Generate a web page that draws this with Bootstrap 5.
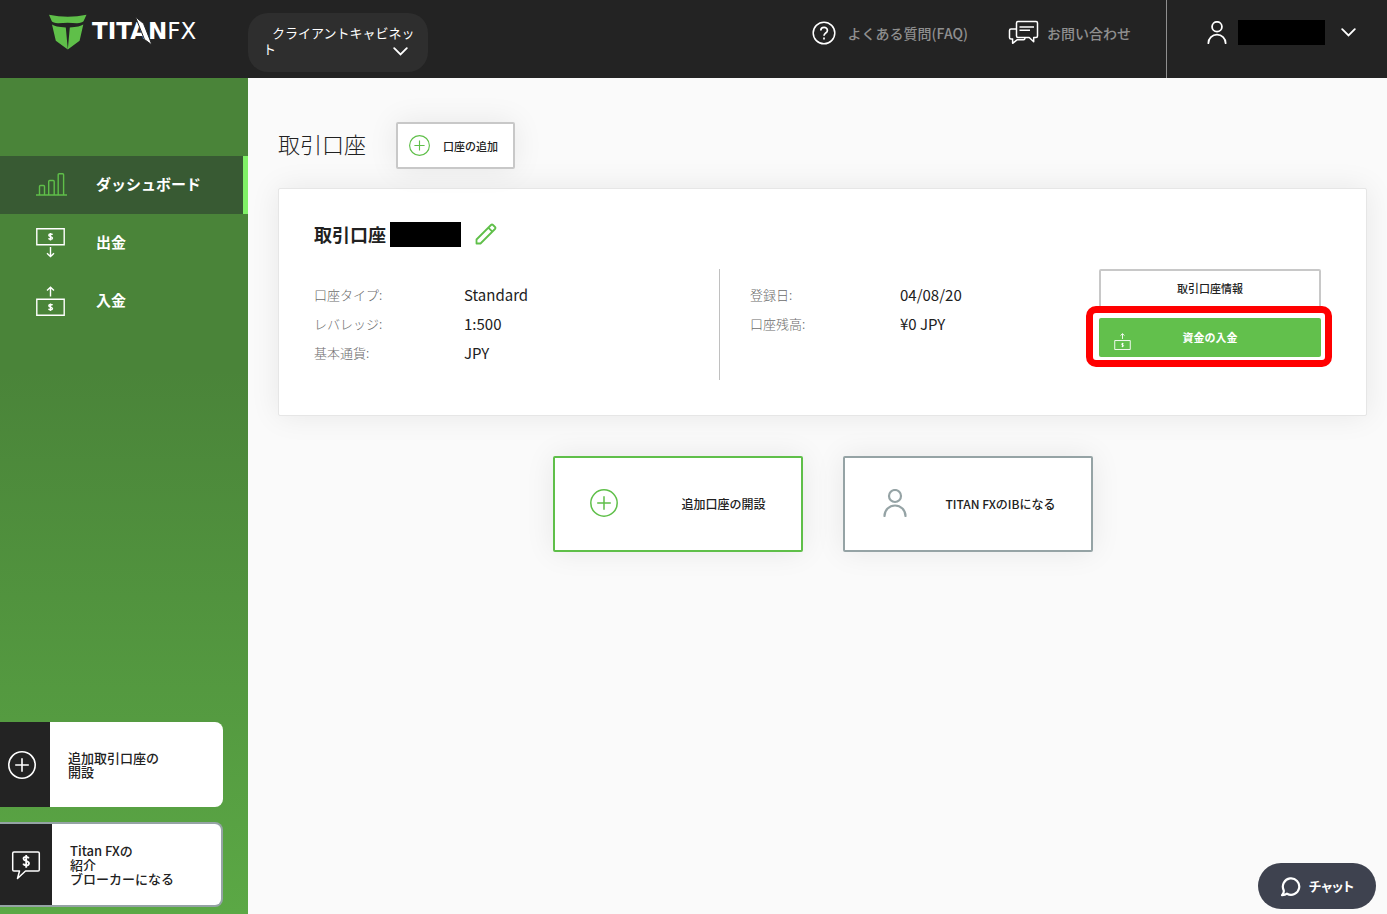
<!DOCTYPE html>
<html lang="ja">
<head>
<meta charset="utf-8">
<meta name="viewport" content="width=device-width, initial-scale=1">
<title>Titan FX クライアントキャビネット</title>
<link rel="stylesheet" href="https://cdn.jsdelivr.net/npm/bootstrap@5.3.0/dist/css/bootstrap.min.css">
<style>
  body { font-family: "Noto Sans CJK JP", "Open Sans", sans-serif; background: #fafafa; color: #212121; }
  svg { display: block; flex: none; fill: none; stroke: currentColor; }
  a { color: inherit; text-decoration: none; }

  .topbar { background: #232323; height: 78px; }
  .topbar-item { height: 65px; }
  .brand { width: 248px; padding: 14px 0 0 48px; }
  .brand-name { fill: #fff; stroke: none; font: 700 23px "DejaVu Sans", sans-serif; }
  .brand-name .thin { font-weight: 400; }
  .cabinet { width: 180px; height: 59px; margin-top: 13px; padding: 0 10px 4px 15px; border: 0; border-radius: 20px; background: #2e2e2e; color: #fff; font-size: 13px; line-height: 16px; text-indent: 9px; text-align: left; }
  .cabinet svg { right: 20px; bottom: 16px; }
  .cabinet:hover { background: #2e2e2e; color: #fff; }
  .help-link { color: #8f8f8f; font-size: 14px; line-height: 20px; font-weight: 500; }
  .help-link svg { color: #fff; }
  .help-links { gap: 40px; padding-right: 35px; }
  .user-menu { width: 221px; height: 78px; border: 0; border-left: 1px solid #8f8f8f; background: none; color: #fff; padding: 0 30px 13px 40px; }
  .redacted { background: #000; height: 25px; }
  .redacted-user { width: 87px; margin: 0 16px 0 11px; }
  .redacted-account { width: 71px; margin: 0 14px 0 4px; }

  .side { width: 248px; min-height: calc(100vh - 78px); padding: 78px 0 7px; background: linear-gradient(#4a8439 0%, #4a8439 35%, #5ba845 100%); }
  .side-link { height: 58px; padding: 0 0 2px 36px; color: #fff; font-size: 15px; font-weight: 700; line-height: 20px; }
  .side-link .icon-slot { width: 60px; flex: none; padding-top: 1px; }
  .side-link.current { background: #385a33; border-right: 5px solid #80f067; }
  .side-link.current svg { color: #5fbf49; }
  .promos { gap: 15px; }
  .promo { width: 223px; height: 85px; border-radius: 0 8px 8px 0; overflow: hidden; background: #fff; font-size: 13px; line-height: 14px; font-weight: 500; }
  .promo-icon { width: 50px; background: #232323; color: #fff; padding-left: 8px; }
  .promo-grey { border: 2px solid #95a3a5; border-left: 0; }
  .promo-grey .promo-icon { width: 52px; padding-left: 11px; }
  .promo-text { padding-left: 18px; }

  .content { padding: 44px 20px 40px 30px; }
  .page-title { font-size: 22px; font-weight: 300; line-height: 30px; padding-bottom: 5px; margin: 0 30px 0 0; }
  .soft { box-shadow: 0 0 30px rgba(0, 0, 0, .08); }
  .box-btn { background: #fff; border: 2px solid #c8c8c8; border-radius: 2px; color: #212121; font-weight: 500; line-height: 16px; }
  .add-btn { width: 119px; height: 47px; font-size: 11px; padding: 0 0 0 11px; gap: 13px; }
  .green { color: #5fbf49; }
  .account { margin-top: 19px; padding: 32px 45px 35px 35px; background: #fff; border: 1px solid #e6e6e6; border-radius: 2px; }
  .account h2 { font-size: 18px; font-weight: 700; line-height: 26px; }
  .account-grid { display: grid; grid-template-columns: minmax(0, 406fr) minmax(0, 379fr) 222px; margin-top: 22px; }
  .facts { display: grid; grid-template-columns: 150px 1fr; grid-auto-rows: 29px; align-items: center; height: 111px; padding-top: 11px; margin: 0; }
  .facts dt { color: #6c6c6c; font-size: 13px; font-weight: 300; line-height: 20px; }
  .facts dd { margin: 0; font-size: 15px; line-height: 20px; font-weight: 400; }
  .facts-first { border-right: 1px solid #c0c0c0; }
  .facts-second { padding-left: 30px; }
  .side-btn { height: 39px; font-size: 11px; width: 100%; }
  .box-btn.side-btn { padding-bottom: 3px; }
  .deposit { position: relative; z-index: 1; margin-top: 10px; }
  .deposit::before { content: ""; position: absolute; z-index: -1; inset: -12px -11px -10px -13px; border: 7px solid #f00; border-radius: 10px; background: #fff; }
  .deposit button { background: #62c04c; border: 0; border-radius: 2px; color: #fff; font-weight: 700; }
  .deposit svg { left: 15px; top: 15px; }
  .big-btns { gap: 40px; margin-top: 40px; }
  .big-btn { width: 250px; height: 96px; font-size: 12px; padding: 0 35px; }
  .big-btn.open { border-color: #5fbf49; }
  .big-btn.partner { border-color: #95a3a5; padding-left: 38px; }
  .big-btn svg { margin-bottom: 2px; }
  .partner svg { color: #95a3a5; }
  .chat { right: 11px; bottom: 5px; width: 118px; height: 46px; border: 0; border-radius: 23px; background: #3e424f; color: #fff; font-size: 13px; font-weight: 700; line-height: 20px; gap: 8px; font-feature-settings: "palt"; }
</style>
</head>
<body>
<svg width="0" height="0" class="position-absolute" aria-hidden="true">
  <symbol id="plus" viewBox="0 0 28 28"><circle cx="14" cy="14" r="13.2"/><path d="M14 7.2v13.6M7.2 14h13.6"/></symbol>
  <symbol id="person" viewBox="0 0 24 28"><circle cx="12" cy="7" r="6"/><path d="M1.5 27a10.5 10.5 0 0 1 21 0" stroke-linecap="round"/></symbol>
  <symbol id="deposit" viewBox="0 0 29 30"><path d="M.8 13.3h27.4v15.9H.8z"/><path d="M14.5 10.5V1.5M11 4.5l3.500-3.300 3.500 3.300M16.500 19.200c-.4-1-3.700-1.100-3.700.5 0 1.700 3.700 1.200 3.700 2.900 0 1.700-3.500 1.500-3.900.2M14.500 17.500v7.500"/></symbol>
  <symbol id="withdraw" viewBox="0 0 29 30"><path d="M.8 .8h27.400v15.900H.8z"/><path d="M14.500 19v9.500M11 25.300l3.500 3.300 3.500-3.300M16.500 6.700c-.4-1-3.700-1.100-3.700.5 0 1.700 3.700 1.200 3.700 2.900 0 1.700-3.500 1.500-3.900.2M14.500 5v7.500"/></symbol>
  <symbol id="chevron" viewBox="0 0 15 9"><path d="M1.200 1.200l6.300 6.300 6.300-6.300" stroke-linecap="round"/></symbol>
</svg>

<header class="topbar d-flex align-items-start">
  <a class="brand" href="#" aria-label="Titan FX">
    <svg width="160" height="37" viewBox="0 0 160 37">
      <path fill="#5fbf49" stroke="none" d="M1 .8 Q20 4.500 38.500 .8 L35.500 7.300 Q34 9 29 9.300 Q20 8 10 9.300 Q5 9 3.800 7.300Z M4 10.500 Q7 13 17.800 13.400 L19.800 35.500 L7.800 26.800Z M35.300 10.500 Q32 13 21.800 13.400 L19.800 35.500 L31.600 26.800Z"/>
      <text class="brand-name" x="44" y="25">TITAN<tspan class="thin">FX</tspan></text>
      <path fill="#fff" stroke="#232323" stroke-width="1" d="M87.500 3l8 6.500L104 31l-7.500-5.500z"/>
    </svg>
  </a>
  <button class="cabinet btn position-relative" type="button">クライアントキャビネット
    <svg class="position-absolute" width="15" height="9" stroke-width="1.800"><use href="#chevron"/></svg>
  </button>
  <nav class="help-links topbar-item d-flex align-items-center ms-auto">
    <a class="help-link d-flex align-items-center gap-2" href="#">
      <svg class="me-1" width="24" height="24" viewBox="0 0 24 24" stroke-width="1.500"><circle cx="12" cy="12" r="10.800"/><path stroke-width="1.700" d="M8.800 9.600c0-4.200 6.600-4.200 6.600-.2 0 2.600-3.400 2.600-3.400 5.300M12 16.500v1.900"/></svg>
      よくある質問(FAQ)</a>
    <a class="help-link d-flex align-items-center gap-2" href="#">
      <svg width="31" height="25" viewBox="0 0 31 25" stroke-width="1.500" stroke-linejoin="round"><path d="M10 1.500h18q1.500 0 1.500 1.500v13q0 1.500-1.500 1.500h-2.300v4.300l-4.500-4.300H10q-1.500 0-1.500-1.500V3q0-1.500 1.500-1.500zM8.500 9H3Q1.500 9 1.500 10.500v7Q1.500 19 3 19h1.600v4.300L9 19.800h6.500q1.500 0 1.500-2.300M11.500 7h14.500M11.500 10.300h10.500"/></svg>
      お問い合わせ</a>
  </nav>
  <button class="user-menu d-flex align-items-center" type="button" aria-label="ユーザーメニュー">
    <svg width="20" height="23" stroke-width="2.200"><use href="#person"/></svg>
    <span class="redacted redacted-user"></span>
    <svg width="15" height="9" stroke-width="1.800"><use href="#chevron"/></svg>
  </button>
</header>

<div class="d-flex">
  <aside class="side d-flex flex-column flex-shrink-0">
    <nav>
      <a class="side-link current d-flex align-items-center" href="#"><span class="icon-slot"><svg width="31" height="23" viewBox="0 0 31 23" stroke-width="1.400"><path d="M0 22h31M3.500 22V13.500q0-1 1-1h3q1 0 1 1V22M12.700 22V8.500q0-1 1-1h3.500q1 0 1 1V22M22.200 22V1.700q0-1 1-1h3.400q1 0 1 1V22"/></svg></span>ダッシュボード</a>
      <a class="side-link d-flex align-items-center" href="#"><span class="icon-slot"><svg width="29" height="30" stroke-width="1.400"><use href="#withdraw"/></svg></span>出金</a>
      <a class="side-link d-flex align-items-center" href="#"><span class="icon-slot"><svg width="29" height="30" stroke-width="1.400"><use href="#deposit"/></svg></span>入金</a>
    </nav>
    <div class="promos mt-auto d-flex flex-column">
      <a class="promo d-flex" href="#">
        <span class="promo-icon d-flex align-items-center"><svg width="28" height="28" stroke-width="1.600"><use href="#plus"/></svg></span>
        <span class="promo-text align-self-center">追加取引口座の<br>開設</span>
      </a>
      <a class="promo promo-grey d-flex" href="#">
        <span class="promo-icon d-flex align-items-center"><svg width="30" height="30" viewBox="0 0 30 30" stroke-width="1.500" stroke-linejoin="round"><path d="M3 2h24q1.300 0 1.300 1.300v16.400q0 1.300-1.300 1.300H14.500l-8 7.500 2-7.500H3q-1.300 0-1.300-1.300V3.300Q1.700 2 3 2z"/><path stroke-width="1.800" d="M17.800 8.300c-.8-2-5.300-2.100-5.300.4 0 2.600 5.500 1.700 5.500 4.700 0 2.900-5 2.600-5.800.2M15.200 5v12.800"/></svg></span>
        <span class="promo-text align-self-center">Titan FXの<br>紹介<br>ブローカーになる</span>
      </a>
    </div>
  </aside>

  <main class="content flex-grow-1">
    <div class="d-flex align-items-center">
      <h1 class="page-title">取引口座</h1>
      <button class="box-btn add-btn soft d-flex align-items-center" type="button">
        <svg class="green" width="21" height="21" stroke-width="1.500"><use href="#plus"/></svg>口座の追加</button>
    </div>

    <section class="account soft">
      <div class="d-flex align-items-center">
        <h2 class="mb-0">取引口座</h2>
        <span class="redacted redacted-account"></span>
        <a href="#" class="green" aria-label="編集"><svg width="22" height="22" viewBox="0 0 22 22" stroke-width="1.800" stroke-linejoin="round"><path d="M1.500 20.500v-4L16 2q1-1 2 0l2 2q1 1 0 2L5.500 20.500zM13.300 4.700l4 4"/></svg></a>
      </div>
      <div class="account-grid">
        <dl class="facts facts-first">
          <dt>口座タイプ:</dt><dd>Standard</dd>
          <dt>レバレッジ:</dt><dd>1:500</dd>
          <dt>基本通貨:</dt><dd>JPY</dd>
        </dl>
        <dl class="facts facts-second">
          <dt>登録日:</dt><dd>04/08/20</dd>
          <dt>口座残高:</dt><dd>¥0 JPY</dd>
        </dl>
        <div>
          <button class="box-btn side-btn d-block" type="button">取引口座情報</button>
          <div class="deposit">
            <button class="side-btn d-block position-relative" type="button">
              <svg class="position-absolute" width="17" height="17" stroke-width="1.600"><use href="#deposit"/></svg>資金の入金</button>
          </div>
        </div>
      </div>
    </section>

    <div class="big-btns d-flex flex-wrap justify-content-center">
      <button class="box-btn big-btn open soft d-flex align-items-center justify-content-between" type="button"><svg class="green" width="28" height="28" stroke-width="1.500"><use href="#plus"/></svg>追加口座の開設</button>
      <button class="box-btn big-btn partner soft d-flex align-items-center justify-content-between" type="button"><svg width="24" height="28" stroke-width="2.200"><use href="#person"/></svg>TITAN FXのIBになる</button>
    </div>
  </main>
</div>

<button class="chat position-fixed d-flex align-items-center justify-content-center" type="button">
  <svg width="21" height="21" viewBox="0 0 21 21" stroke-width="2.200" stroke-linejoin="round"><path d="M3.700 14.200A8.200 8.200 0 1 1 7 17.700Q5 19.300 2 19.200 4.300 16.800 3.700 14.200z"/></svg>チャット</button>
<script src="https://cdn.jsdelivr.net/npm/bootstrap@5.3.0/dist/js/bootstrap.bundle.min.js"></script>
</body>
</html>
